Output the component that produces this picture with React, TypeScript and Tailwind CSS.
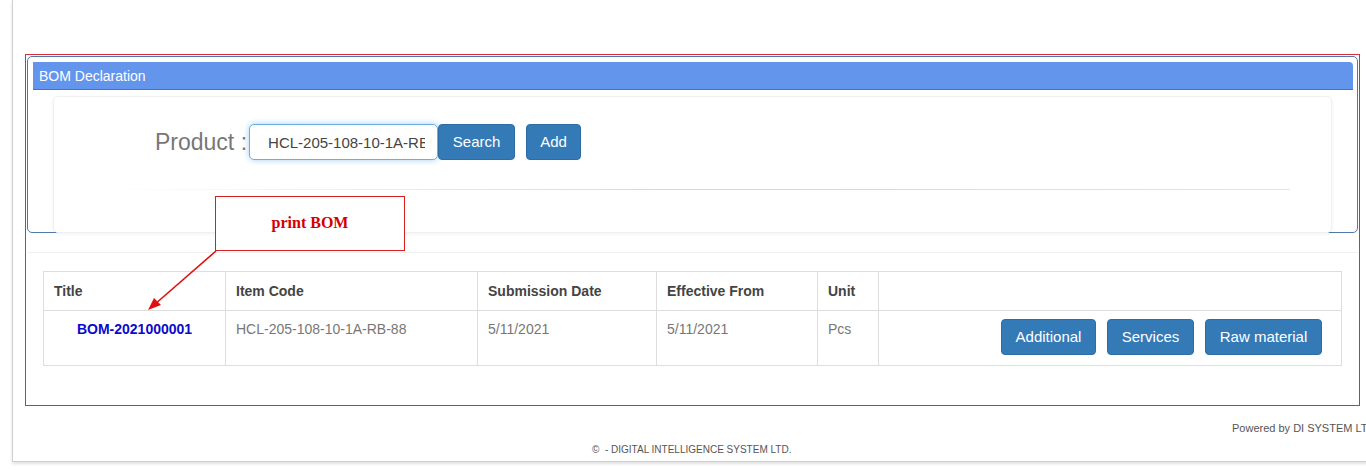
import React from "react";

// BOM Declaration screen

const cols = [182, 252, 179, 161, 61, 463];

function BlueButton({ label, w }: { label: string; w: string }) {
  return (
    <button
      className={`${w} h-[36px] rounded-[4px] border border-[#2e6da4] bg-[#337ab7] text-[15px] text-white`}
    >
      {label}
    </button>
  );
}

export default function App() {
  return (
    <div
      className="relative h-[470px] w-full overflow-hidden bg-white"
      style={{ fontFamily: '"Liberation Sans", Arial, sans-serif' }}
    >
      {/* page frame */}
      <div className="ml-[12px] h-[462px] w-[1380px] border-b border-l border-[#d0d0d0] bg-white pl-[12px] pt-[54px] shadow-[0_2px_3px_rgba(0,0,0,0.12)]">
        {/* red outline box */}
        <div className="h-[352px] w-[1335px] border border-[#d8303a] p-[1px]">
          {/* BOM declaration panel */}
          <div className="h-[177px] w-[1331px] rounded-[5px] border border-[#4f79a8] pl-[5px] pr-[4px] pt-[5px]">
            <div className="flex h-[28px] items-center rounded-tr-[4px] border-b border-[#4a74b8] bg-[#6495ed] pl-[6px] pt-[1px] text-[14px] text-white">
              BOM Declaration
            </div>
            <div className="ml-[20px] mt-[6px] h-[137px] w-[1279px] rounded-[5px] border border-[#eef0f3] bg-white shadow-[0_1px_4px_rgba(0,0,0,0.06)]">
              <div className="flex items-center pl-[101px] pt-[27px]">
                <span className="text-[23px] text-[#777]">Product :</span>
                <input
                  readOnly
                  value="HCL-205-108-10-1A-RB-88"
                  className="ml-[2px] h-[36px] w-[189px] rounded-[5px] border border-[#66afe9] bg-white pl-[18px] pr-[12px] text-[15px] text-[#444] shadow-[0_0_6px_rgba(102,175,233,0.6)] outline-none"
                  style={{ fontFamily: '"Liberation Sans", Arial, sans-serif' }}
                />
                <BlueButton label="Search" w="w-[77px]" />
                <div className="w-[11px]" />
                <BlueButton label="Add" w="w-[55px]" />
              </div>
              <div className="ml-[46px] mt-[29px] h-[1px] w-[1190px] bg-gradient-to-r from-transparent via-[#d6d6d6] to-[#e4e4e4]" />
            </div>
          </div>

          {/* faint separator */}
          <div className="mt-[19px] h-[1px] w-full bg-[#f0f0f0]" />

          {/* results table */}
          <div className="ml-[16px] mt-[18px]">
            <table className="border-collapse text-[14px]">
              <colgroup>
                {cols.map((w, i) => (
                  <col key={i} style={{ width: w }} />
                ))}
              </colgroup>
              <thead>
                <tr className="h-[39px] text-left font-bold text-[#444]">
                  <th className="border border-[#ddd] pl-[10px]">Title</th>
                  <th className="border border-[#ddd] pl-[10px]">Item Code</th>
                  <th className="border border-[#ddd] pl-[10px]">Submission Date</th>
                  <th className="border border-[#ddd] pl-[10px]">Effective From</th>
                  <th className="border border-[#ddd] pl-[10px]">Unit</th>
                  <th className="border border-[#ddd]"></th>
                </tr>
              </thead>
              <tbody>
                <tr className="h-[55px] align-top text-[#777]">
                  <td className="border border-[#ddd] pt-[8px] text-center font-bold text-[#0a0acd]">
                    BOM-2021000001
                  </td>
                  <td className="border border-[#ddd] pl-[10px] pt-[8px]">HCL-205-108-10-1A-RB-88</td>
                  <td className="border border-[#ddd] pl-[10px] pt-[8px]">5/11/2021</td>
                  <td className="border border-[#ddd] pl-[10px] pt-[8px]">5/11/2021</td>
                  <td className="border border-[#ddd] pl-[10px] pt-[8px]">Pcs</td>
                  <td className="border border-[#ddd] pr-[19px] pt-[8px]">
                    <div className="flex justify-end gap-[11px]">
                      <BlueButton label="Additional" w="w-[95px]" />
                      <BlueButton label="Services" w="w-[87px]" />
                      <BlueButton label="Raw material" w="w-[117px]" />
                    </div>
                  </td>
                </tr>
              </tbody>
            </table>
          </div>
        </div>

        {/* footer */}
        <div className="mt-[15px] pl-[1207px] text-[11px] leading-[14px] text-[#555]">
          Powered by DI SYSTEM LTD.
        </div>
        <div className="mt-[8px] pl-[567px] text-[10px] leading-[14px] text-[#555]">
          ©&nbsp; - DIGITAL INTELLIGENCE SYSTEM LTD.
        </div>
      </div>

      {/* annotation callout */}
      <div
        className="absolute left-[215px] top-[196px] flex h-[55px] w-[190px] items-center justify-center border border-[#d42020] bg-white pb-[2px] text-[16px] font-bold text-[#d40000]"
        style={{ fontFamily: '"Liberation Serif", "Times New Roman", serif' }}
      >
        print BOM
      </div>
      <svg className="absolute left-[140px] top-[245px]" width="90" height="75" viewBox="0 0 90 75">
        <line x1="76" y1="6" x2="14" y2="60" stroke="#e01010" strokeWidth="1.6" />
        <polygon points="8,65 14,53 21,60" fill="#e01010" />
      </svg>
    </div>
  );
}
